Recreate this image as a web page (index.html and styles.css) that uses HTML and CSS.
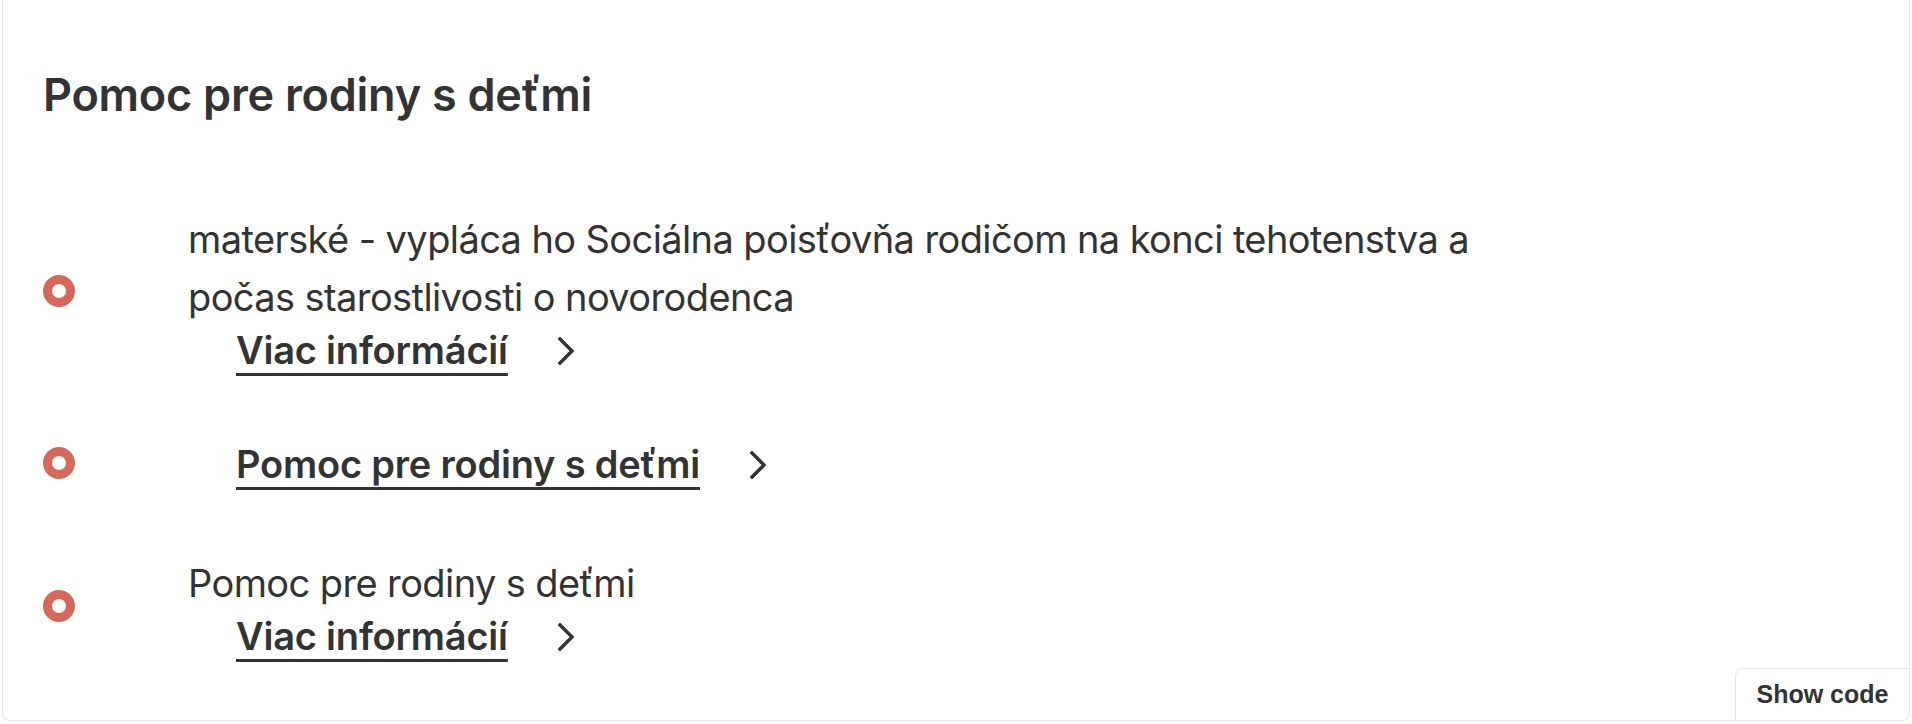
FILE: index.html
```html
<!DOCTYPE html>
<html lang="sk">
<head>
<meta charset="utf-8">
<title>Pomoc pre rodiny s deťmi</title>
<link rel="stylesheet" href="styles.css">
</head>
<body>
<div class="frame">
  <h2 class="title">Pomoc pre rodiny s deťmi</h2>
  <ul class="list">
    <li class="item">
      <span class="dot"></span>
      <div class="body">
        <p class="desc">materské - vypláca ho Sociálna poisťovňa rodičom na konci tehotenstva a<br>počas starostlivosti o novorodenca</p>
        <a class="more" href="#"><span class="more-text">Viac informácií</span><svg class="chev" viewBox="0 0 20 32" width="20" height="32"><polyline points="4,4 16,16 4,28" fill="none" stroke="#333" stroke-width="3.4" stroke-linecap="square" stroke-linejoin="miter"/></svg></a>
      </div>
    </li>
    <li class="item">
      <span class="dot"></span>
      <div class="body">
        <a class="more" href="#"><span class="more-text">Pomoc pre rodiny s deťmi</span><svg class="chev" viewBox="0 0 20 32" width="20" height="32"><polyline points="4,4 16,16 4,28" fill="none" stroke="#333" stroke-width="3.4" stroke-linecap="square" stroke-linejoin="miter"/></svg></a>
      </div>
    </li>
    <li class="item">
      <span class="dot"></span>
      <div class="body">
        <p class="desc">Pomoc pre rodiny s deťmi</p>
        <a class="more" href="#"><span class="more-text">Viac informácií</span><svg class="chev" viewBox="0 0 20 32" width="20" height="32"><polyline points="4,4 16,16 4,28" fill="none" stroke="#333" stroke-width="3.4" stroke-linecap="square" stroke-linejoin="miter"/></svg></a>
      </div>
    </li>
  </ul>
  <button class="show-code" type="button">Show code</button>
</div>
</body>
</html>
```
FILE: styles.css
```css
html, body {
  margin: 0;
  padding: 0;
  background: #ffffff;
}
body {
  font-family: Inter, "Noto Sans", sans-serif;
  color: #333333;
}
.frame {
  position: relative;
  box-sizing: border-box;
  margin: 0 2px;
  height: 721px;
  border: 1px solid #e3e3e3;
  border-top: none;
  border-radius: 0 0 8px 8px;
  box-shadow: 0 2px 3px rgba(0,0,0,0.04);
  padding: 67px 40px 0 40px;
  overflow: hidden;
}
.title {
  margin: 0;
  font-size: 45px;
  font-weight: 600;
  line-height: 56px;
  letter-spacing: -0.25px;
}
.list {
  list-style: none;
  margin: 0;
  padding: 0;
  margin-top: 87px;
  display: flex;
  flex-direction: column;
  gap: 65px;
}
.item {
  display: flex;
  align-items: center;
  gap: 113px;
}
.dot {
  flex: none;
  box-sizing: border-box;
  width: 32px;
  height: 32px;
  margin-bottom: 3px;
  border-radius: 50%;
  border: 9px solid #d6685a;
  background: #ffffff;
}
.body {
  display: flex;
  flex-direction: column;
  align-items: flex-start;
}
.desc {
  margin: 0;
  font-size: 38px;
  line-height: 58px;
  font-weight: 400;
  letter-spacing: -0.6px;
}
.more {
  display: inline-flex;
  align-items: center;
  gap: 48px;
  margin-left: 48px;
  color: #333333;
  font-size: 38px;
  font-weight: 600;
  line-height: 49px;
  letter-spacing: -0.2px;
  text-decoration: none;
}
.more-text {
  text-decoration: underline;
  text-decoration-thickness: 3px;
  text-underline-offset: 9px;
}
.chev {
  display: block;
}
.show-code {
  position: absolute;
  right: -1px;
  bottom: -1px;
  width: 175px;
  height: 53px;
  box-sizing: border-box;
  border: 1px solid #e3e3e3;
  border-radius: 8px 0 0 0;
  background: #ffffff;
  font-family: "Liberation Sans", Arial, sans-serif;
  font-weight: 700;
  font-size: 25px;
  color: #333333;
  padding: 0;
}
```
